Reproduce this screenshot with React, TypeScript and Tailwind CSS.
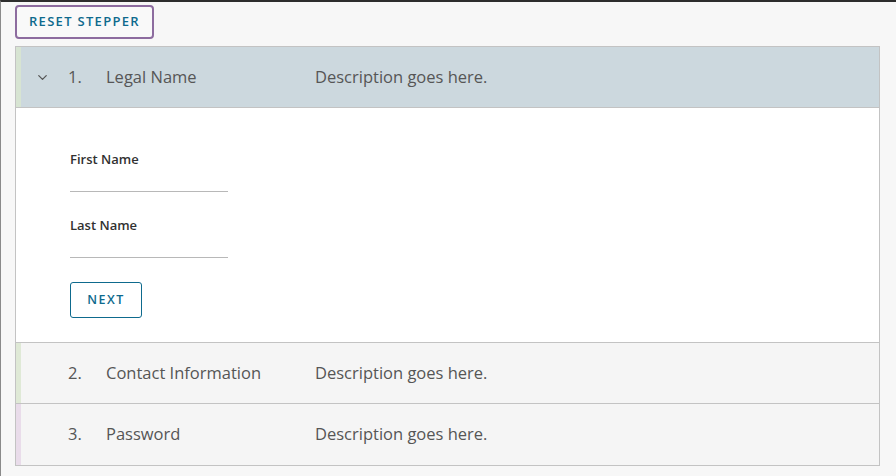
import { ChevronDown } from 'lucide-react';

const font = { fontFamily: '"Open Sans", "Liberation Sans", sans-serif' };

interface Step {
 num: string;
 title: string;
 strip: string;
}

const steps: Step[] = [
 { num: '2.', title: 'Contact Information', strip: 'bg-[#dfe9d6]' },
 { num: '3.', title: 'Password', strip: 'bg-[#e9dcea]' },
];

function Field({ label }: { label: string }) {
 return (
 <div className="w-[158px]">
 <div className="text-[13px] font-semibold text-[#313131] leading-4">{label}</div>
 <div className="h-[25px] border-b border-[#b8b8b8]" />
 </div>
 );
}

export default function App() {
 return (
 <div className="w-[896px] h-[476px] bg-[#f7f7f7] border-t-2 border-l border-t-[#2d2d2d] border-l-[#8a8a8a] pl-[14px] pr-[16px] pt-[3px]" style={font}>
 <button className="h-[34px] px-[12px] border-2 border-[#8d6c9f] rounded-[4px] bg-[#f9f9f9] text-[13px] font-semibold tracking-[0.1em] text-[#0e6a8d]">
 RESET STEPPER
 </button>

 <div className="mt-[7px] border border-[#c3c3c3]">
 <div className="flex h-[61px] bg-[#ccd8de] border-b border-[#c3c3c3]">
 <div className="w-[5px] bg-[#d7e4d2]" />
 <div className="flex items-center text-[16.5px] text-[#565656]">
 <ChevronDown className="ml-[14px] w-[15px] h-[15px] text-[#565656]" strokeWidth={2} />
 <span className="ml-[18px] w-[38px]">1.</span>
 <span className="w-[209px]">Legal Name</span>
 <span>Description goes here.</span>
 </div>
 </div>

 <div className="bg-white h-[235px] pl-[54px] pt-[43px] border-b border-[#c3c3c3]">
 <div className="flex flex-col gap-[25px]">
 <Field label="First Name" />
 <Field label="Last Name" />
 </div>
 <button className="mt-[24px] w-[72px] h-[36px] border border-[#0e6a8d] rounded-[3px] bg-white text-[12.5px] font-semibold tracking-[0.12em] text-[#0e6a8d]">
 NEXT
 </button>
 </div>

 {steps.map((s, i) => (
 <div key={s.num} className={`flex h-[61px] bg-[#f5f5f5] ${i === 0 ? 'border-b border-[#c3c3c3]' : ''}`}>
 <div className={`w-[5px] ${s.strip}`} />
 <div className="flex items-center text-[16.5px] text-[#565656]">
 <span className="ml-[47px] w-[38px]">{s.num}</span>
 <span className="w-[209px]">{s.title}</span>
 <span>Description goes here.</span>
 </div>
 </div>
 ))}
 </div>
 </div>
 );
}
